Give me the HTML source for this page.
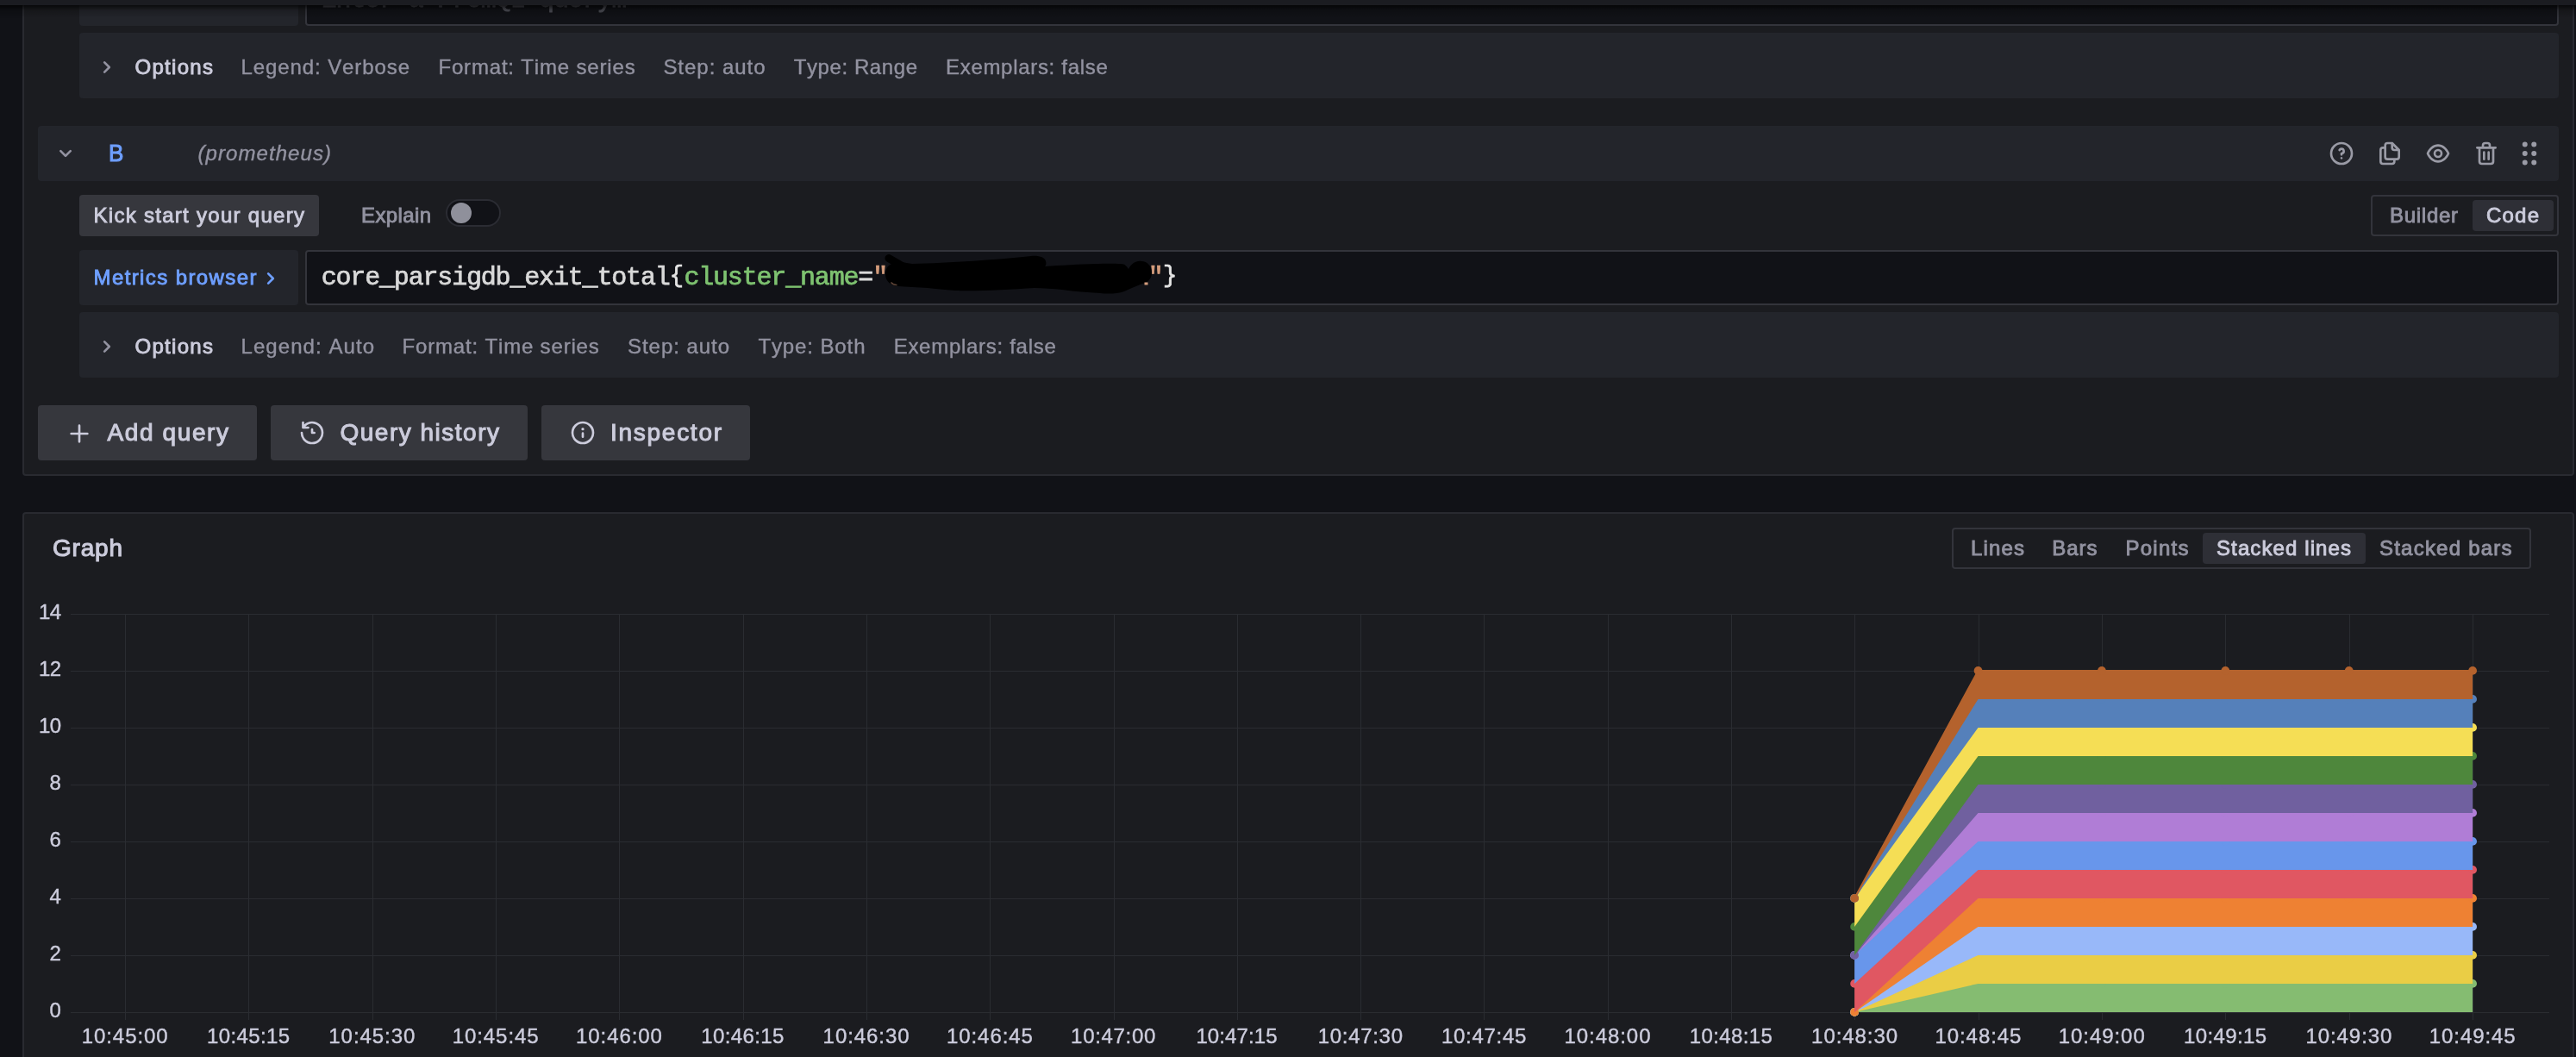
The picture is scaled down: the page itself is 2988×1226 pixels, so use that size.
<!DOCTYPE html>
<html lang="en"><head><meta charset="utf-8"><title>Explore - Grafana</title><style>
html,body{margin:0;padding:0}
body{width:2988px;height:1226px;overflow:hidden;background:#111217;position:relative;
font-family:"Liberation Sans",sans-serif;font-kerning:none}
.a{position:absolute;box-sizing:border-box}
.t{position:absolute;white-space:pre;font-family:"Liberation Sans",sans-serif}
#root{position:absolute;left:0;top:0;width:2988px;height:1226px;will-change:transform;overflow:hidden}
.br{display:inline-block;width:16.825px;font-size:27px;letter-spacing:0;text-align:center;position:relative;top:-3.2px}
.code{font-family:"Liberation Mono",monospace;font-size:30px;line-height:30px;letter-spacing:-1.175px;-webkit-text-stroke:0.75px currentColor}
</style></head>
<body>
<div id="root">
<div class="a" style="left:26px;top:-40px;width:2960px;height:592px;background:#1b1c20;border-radius:4px;border:2px solid #292a30;"></div>
<div class="a" style="left:92px;top:-34px;width:254px;height:64px;background:#23252b;border-radius:4px;"></div>
<div class="a" style="left:354px;top:-34px;width:2614px;height:64px;background:#111217;border-radius:4px;border:2px solid #33343b;"></div>
<span class="t code" style="left:372.7px;top:-15.5px;color:#4e4f57">Enter a PromQL query…</span>
<div class="a" style="left:92px;top:38px;width:2876px;height:76px;background:#23252b;border-radius:4px;"></div>
<svg class="a" style="left:107.50px;top:61.50px" width="32" height="32" viewBox="0 0 24 24"><path fill="#9292a0" d="M14.83,11.29,10.59,7.05a1,1,0,0,0-1.42,0,1,1,0,0,0,0,1.41L12.71,12,9.17,15.54a1,1,0,0,0,0,1.41,1,1,0,0,0,.71.29,1,1,0,0,0,.71-.29l4.24-4.24A1,1,0,0,0,14.83,11.29Z"/></svg>
<div class="a" style="left:44px;top:146px;width:2924px;height:64px;background:#23252b;border-radius:4px;"></div>
<svg class="a" style="left:60.00px;top:162.00px" width="32" height="32" viewBox="0 0 24 24"><path fill="#9292a0" d="M17,9.17a1,1,0,0,0-1.41,0L12,12.71,8.46,9.17a1,1,0,0,0-1.41,0,1,1,0,0,0,0,1.42l4.24,4.24a1,1,0,0,0,1.42,0L17,10.59A1,1,0,0,0,17,9.17Z"/></svg>
<svg class="a" style="left:2700.00px;top:162.00px" width="32" height="32" viewBox="0 0 24 24"><path fill="#9a9ba6" d="M11.29,15.29a1.58,1.58,0,0,0-.12.15.76.76,0,0,0-.09.18.64.64,0,0,0-.06.18,1.36,1.36,0,0,0,0,.2.84.84,0,0,0,.08.38.9.9,0,0,0,.54.54.94.94,0,0,0,.76,0,.9.9,0,0,0,.54-.54A1,1,0,0,0,13,16a1,1,0,0,0-.29-.71A1,1,0,0,0,11.29,15.29ZM12,2A10,10,0,1,0,22,12,10,10,0,0,0,12,2Zm0,18a8,8,0,1,1,8-8A8,8,0,0,1,12,20ZM12,7A3,3,0,0,0,9.4,8.5a1,1,0,1,0,1.73,1A1,1,0,0,1,12,9a1,1,0,0,1,0,2,1,1,0,0,0-1,1v1a1,1,0,0,0,2,0v-.18A3,3,0,0,0,12,7Z"/></svg>
<svg class="a" style="left:2756.00px;top:162.00px" width="32" height="32" viewBox="0 0 24 24"><path fill="#9a9ba6" d="M21,8.94a1.31,1.31,0,0,0-.06-.27l0-.09a1.07,1.07,0,0,0-.19-.28h0l-6-6h0a1.07,1.07,0,0,0-.28-.19.32.32,0,0,0-.09,0A.88.88,0,0,0,14.05,2H10A3,3,0,0,0,7,5V6H6A3,3,0,0,0,3,9V19a3,3,0,0,0,3,3h8a3,3,0,0,0,3-3V18h1a3,3,0,0,0,3-3V9S21,9,21,8.94ZM15,5.41,17.59,8H16a1,1,0,0,1-1-1ZM15,19a1,1,0,0,1-1,1H6a1,1,0,0,1-1-1V9A1,1,0,0,1,6,8H7v7a3,3,0,0,0,3,3h5Zm4-4a1,1,0,0,1-1,1H10a1,1,0,0,1-1-1V5a1,1,0,0,1,1-1h3V7a3,3,0,0,0,3,3h3Z"/></svg>
<svg class="a" style="left:2812.00px;top:162.00px" width="32" height="32" viewBox="0 0 24 24"><path fill="#9a9ba6" d="M21.92,11.6C19.9,6.91,16.1,4,12,4S4.1,6.91,2.08,11.6a1,1,0,0,0,0,.8C4.1,17.09,7.9,20,12,20s7.9-2.91,9.92-7.6A1,1,0,0,0,21.92,11.6ZM12,18c-3.17,0-6.17-2.29-7.9-6C5.83,8.29,8.83,6,12,6s6.17,2.29,7.9,6C18.17,15.71,15.17,18,12,18ZM12,8a4,4,0,1,0,4,4A4,4,0,0,0,12,8Zm0,6a2,2,0,1,1,2-2A2,2,0,0,1,12,14Z"/></svg>
<svg class="a" style="left:2868.00px;top:162.00px" width="32" height="32" viewBox="0 0 24 24"><path fill="#9a9ba6" d="M10,18a1,1,0,0,0,1-1V11a1,1,0,0,0-2,0v6A1,1,0,0,0,10,18ZM20,6H16V5a3,3,0,0,0-3-3H11A3,3,0,0,0,8,5V6H4A1,1,0,0,0,4,8H5V19a3,3,0,0,0,3,3h8a3,3,0,0,0,3-3V8h1a1,1,0,0,0,0-2ZM10,5a1,1,0,0,1,1-1h2a1,1,0,0,1,1,1V6H10Zm7,14a1,1,0,0,1-1,1H8a1,1,0,0,1-1-1V8H17Zm-3-1a1,1,0,0,0,1-1V11a1,1,0,0,0-2,0v6A1,1,0,0,0,14,18Z"/></svg>
<svg class="a" style="left:2916.20px;top:160.20px" width="36" height="36" viewBox="0 0 24 24"><path fill="#9a9ba6" d="M8.5,10a2,2,0,1,0,2,2A2,2,0,0,0,8.5,10Zm0,7a2,2,0,1,0,2,2A2,2,0,0,0,8.5,17Zm7-10a2,2,0,1,0-2-2A2,2,0,0,0,15.5,7Zm-7-4a2,2,0,1,0,2,2A2,2,0,0,0,8.5,3Zm7,14a2,2,0,1,0,2,2A2,2,0,0,0,15.5,17Zm0-7a2,2,0,1,0,2,2A2,2,0,0,0,15.5,10Z"/></svg>
<div class="a" style="left:92px;top:226px;width:278px;height:48px;background:#36373d;border-radius:4px;"></div>
<div class="a" style="left:517px;top:231px;width:64px;height:32px;background:#111217;border-radius:100px;border:2px solid #2b2c33;"></div>
<div class="a" style="left:523px;top:235px;width:24px;height:24px;border-radius:50%;background:#8f909b"></div>
<div class="a" style="left:2750px;top:226px;width:218px;height:48px;border-radius:4px;border:2px solid #33343b;"></div>
<div class="a" style="left:2868px;top:232px;width:94px;height:36px;background:#2e2f36;border-radius:4px;"></div>
<div class="a" style="left:92px;top:290px;width:254px;height:64px;background:#23252b;border-radius:4px;"></div>
<svg class="a" style="left:298.00px;top:306.50px" width="32" height="32" viewBox="0 0 24 24"><path fill="#6e9fff" d="M14.83,11.29,10.59,7.05a1,1,0,0,0-1.42,0,1,1,0,0,0,0,1.41L12.71,12,9.17,15.54a1,1,0,0,0,0,1.41,1,1,0,0,0,.71.29,1,1,0,0,0,.71-.29l4.24-4.24A1,1,0,0,0,14.83,11.29Z"/></svg>
<div class="a" style="left:354px;top:290px;width:2614px;height:64px;background:#111217;border-radius:4px;border:2px solid #33343b;"></div>
<span class="t code" id="code" style="left:372.7px;top:307.02px"><span style="color:#d9d9d9">core_parsigdb_exit_total</span><span class="br" style="color:#e4e4e4">{</span><span style="color:#7ec270">cluster_name</span><span style="color:#d9d9d9">=</span><span style="color:#d49c7c">"</span><span style="color:#d49c7c">                  "</span><span class="br" style="color:#e4e4e4">}</span></span>
<svg class="a" style="left:1020px;top:290px" width="330" height="60" viewBox="1020 290 330 60"><path d="M1031,299.6 L1054,313" stroke="#000" stroke-width="9.2" stroke-linecap="round" fill="none"/><path fill="#000" d="M1027,318 C1027,310 1032,305 1040,305 C1046,304 1052,305 1058,306 C1100,305 1160,301 1196,297 C1204,296 1212,298 1213,303 C1214,306 1213,308 1212,309 C1240,307 1280,305 1300,306 C1305,306 1307,309 1309,312 C1312,306 1318,302 1324,303 C1331,303 1336,309 1336,316 C1336,322 1333,326 1328,328 C1320,331 1312,334 1304,338 C1296,341 1284,341 1276,340 C1260,339 1245,338 1232,336 C1222,335 1210,334 1200,334 C1170,336 1130,338 1108,337 C1095,336 1085,335 1076,334 C1064,333 1052,333 1042,332 C1033,331 1027,326 1027,318 Z"/><path d="M1033.5,327.5 Q1036,330.5 1040.5,330.6" stroke="#d49c7c" stroke-opacity=".45" stroke-width="1.3" fill="none"/><rect x="1327.5" y="327.5" width="4" height="3" fill="#d49c7c"/></svg>
<div class="a" style="left:92px;top:362px;width:2876px;height:76px;background:#23252b;border-radius:4px;"></div>
<svg class="a" style="left:107.50px;top:385.50px" width="32" height="32" viewBox="0 0 24 24"><path fill="#9292a0" d="M14.83,11.29,10.59,7.05a1,1,0,0,0-1.42,0,1,1,0,0,0,0,1.41L12.71,12,9.17,15.54a1,1,0,0,0,0,1.41,1,1,0,0,0,.71.29,1,1,0,0,0,.71-.29l4.24-4.24A1,1,0,0,0,14.83,11.29Z"/></svg>
<div class="a" style="left:44px;top:470px;width:254px;height:64px;background:#36373d;border-radius:4px;"></div>
<svg class="a" style="left:76.00px;top:486.50px" width="32" height="32" viewBox="0 0 24 24"><path fill="#ccccdc" d="M19,11H13V5a1,1,0,0,0-2,0v6H5a1,1,0,0,0,0,2h6v6a1,1,0,0,0,2,0V13h6a1,1,0,0,0,0-2Z"/></svg>
<div class="a" style="left:314px;top:470px;width:298px;height:64px;background:#36373d;border-radius:4px;"></div>
<svg class="a" style="left:346.00px;top:486.00px" width="32" height="32" viewBox="0 0 24 24"><path fill="#ccccdc" d="M12,2A10,10,0,0,0,5.12,4.77V3a1,1,0,0,0-2,0V7.5a1,1,0,0,0,1,1H8.62a1,1,0,0,0,0-2H6.22A8,8,0,1,1,4,12a1,1,0,0,0-2,0A10,10,0,1,0,12,2Zm0,6a1,1,0,0,0-1,1v3a1,1,0,0,0,1,1h2a1,1,0,0,0,0-2H13V9A1,1,0,0,0,12,8Z"/></svg>
<div class="a" style="left:628px;top:470px;width:242px;height:64px;background:#36373d;border-radius:4px;"></div>
<svg class="a" style="left:659.50px;top:486.00px" width="32" height="32" viewBox="0 0 24 24"><path fill="#ccccdc" d="M12,2A10,10,0,1,0,22,12,10.01114,10.01114,0,0,0,12,2Zm0,18a8,8,0,1,1,8-8A8.00917,8.00917,0,0,1,12,20Zm0-8.5a1,1,0,0,0-1,1v3a1,1,0,0,0,2,0v-3A1,1,0,0,0,12,11.5Zm0-4a1.25,1.25,0,1,0,1.25,1.25A1.25,1.25,0,0,0,12,7.5Z"/></svg>
<div class="a" style="left:26px;top:594px;width:2960px;height:706px;background:#1b1c20;border-radius:4px;border:2px solid #292a30;"></div>
<div class="a" style="left:2264px;top:612px;width:672px;height:48px;border-radius:4px;border:2px solid #33343b;"></div>
<div class="a" style="left:2555px;top:618px;width:189px;height:36px;background:#2e2f36;border-radius:4px;"></div>
<svg class="a" style="left:0;top:0" width="2988" height="1226" viewBox="0 0 2988 1226"><rect x="82" y="1174" width="2875" height="1" fill="#2a2c31"/><rect x="82" y="1108" width="2875" height="1" fill="#2a2c31"/><rect x="82" y="1042" width="2875" height="1" fill="#2a2c31"/><rect x="82" y="976" width="2875" height="1" fill="#2a2c31"/><rect x="82" y="910" width="2875" height="1" fill="#2a2c31"/><rect x="82" y="844" width="2875" height="1" fill="#2a2c31"/><rect x="82" y="778" width="2875" height="1" fill="#2a2c31"/><rect x="82" y="712" width="2875" height="1" fill="#2a2c31"/><rect x="145" y="712" width="1" height="471" fill="#2a2c31"/><rect x="288" y="712" width="1" height="471" fill="#2a2c31"/><rect x="432" y="712" width="1" height="471" fill="#2a2c31"/><rect x="575" y="712" width="1" height="471" fill="#2a2c31"/><rect x="718" y="712" width="1" height="471" fill="#2a2c31"/><rect x="862" y="712" width="1" height="471" fill="#2a2c31"/><rect x="1005" y="712" width="1" height="471" fill="#2a2c31"/><rect x="1148" y="712" width="1" height="471" fill="#2a2c31"/><rect x="1292" y="712" width="1" height="471" fill="#2a2c31"/><rect x="1435" y="712" width="1" height="471" fill="#2a2c31"/><rect x="1578" y="712" width="1" height="471" fill="#2a2c31"/><rect x="1721" y="712" width="1" height="471" fill="#2a2c31"/><rect x="1865" y="712" width="1" height="471" fill="#2a2c31"/><rect x="2008" y="712" width="1" height="471" fill="#2a2c31"/><rect x="2151" y="712" width="1" height="471" fill="#2a2c31"/><rect x="2295" y="712" width="1" height="471" fill="#2a2c31"/><rect x="2438" y="712" width="1" height="471" fill="#2a2c31"/><rect x="2581" y="712" width="1" height="471" fill="#2a2c31"/><rect x="2725" y="712" width="1" height="471" fill="#2a2c31"/><rect x="2868" y="712" width="1" height="471" fill="#2a2c31"/><polygon points="2151.12,1173.90 2294.52,1140.90 2437.92,1140.90 2581.31,1140.90 2724.71,1140.90 2868.10,1140.90 2868.10,1173.90 2724.71,1173.90 2581.31,1173.90 2437.92,1173.90 2294.52,1173.90 2151.12,1173.90" fill="#85bc71"/><polyline points="2151.12,1173.90 2294.52,1140.90 2437.92,1140.90 2581.31,1140.90 2724.71,1140.90 2868.10,1140.90" fill="none" stroke="#85bc71" stroke-width="2"/><circle cx="2151.12" cy="1173.90" r="4.9" fill="#85bc71"/><circle cx="2294.52" cy="1140.90" r="4.9" fill="#85bc71"/><circle cx="2437.92" cy="1140.90" r="4.9" fill="#85bc71"/><circle cx="2581.31" cy="1140.90" r="4.9" fill="#85bc71"/><circle cx="2724.71" cy="1140.90" r="4.9" fill="#85bc71"/><circle cx="2868.10" cy="1140.90" r="4.9" fill="#85bc71"/><polygon points="2151.12,1173.90 2294.52,1107.90 2437.92,1107.90 2581.31,1107.90 2724.71,1107.90 2868.10,1107.90 2868.10,1140.90 2724.71,1140.90 2581.31,1140.90 2437.92,1140.90 2294.52,1140.90 2151.12,1173.90" fill="#eacd45"/><polyline points="2151.12,1173.90 2294.52,1107.90 2437.92,1107.90 2581.31,1107.90 2724.71,1107.90 2868.10,1107.90" fill="none" stroke="#eacd45" stroke-width="2"/><circle cx="2151.12" cy="1173.90" r="4.9" fill="#eacd45"/><circle cx="2294.52" cy="1107.90" r="4.9" fill="#eacd45"/><circle cx="2437.92" cy="1107.90" r="4.9" fill="#eacd45"/><circle cx="2581.31" cy="1107.90" r="4.9" fill="#eacd45"/><circle cx="2724.71" cy="1107.90" r="4.9" fill="#eacd45"/><circle cx="2868.10" cy="1107.90" r="4.9" fill="#eacd45"/><polygon points="2151.12,1173.90 2294.52,1074.90 2437.92,1074.90 2581.31,1074.90 2724.71,1074.90 2868.10,1074.90 2868.10,1107.90 2724.71,1107.90 2581.31,1107.90 2437.92,1107.90 2294.52,1107.90 2151.12,1173.90" fill="#98b8f9"/><polyline points="2151.12,1173.90 2294.52,1074.90 2437.92,1074.90 2581.31,1074.90 2724.71,1074.90 2868.10,1074.90" fill="none" stroke="#98b8f9" stroke-width="2"/><circle cx="2151.12" cy="1173.90" r="4.9" fill="#98b8f9"/><circle cx="2294.52" cy="1074.90" r="4.9" fill="#98b8f9"/><circle cx="2437.92" cy="1074.90" r="4.9" fill="#98b8f9"/><circle cx="2581.31" cy="1074.90" r="4.9" fill="#98b8f9"/><circle cx="2724.71" cy="1074.90" r="4.9" fill="#98b8f9"/><circle cx="2868.10" cy="1074.90" r="4.9" fill="#98b8f9"/><polygon points="2151.12,1173.90 2294.52,1041.90 2437.92,1041.90 2581.31,1041.90 2724.71,1041.90 2868.10,1041.90 2868.10,1074.90 2724.71,1074.90 2581.31,1074.90 2437.92,1074.90 2294.52,1074.90 2151.12,1173.90" fill="#ee8133"/><polyline points="2151.12,1173.90 2294.52,1041.90 2437.92,1041.90 2581.31,1041.90 2724.71,1041.90 2868.10,1041.90" fill="none" stroke="#ee8133" stroke-width="2"/><circle cx="2151.12" cy="1173.90" r="4.9" fill="#ee8133"/><circle cx="2294.52" cy="1041.90" r="4.9" fill="#ee8133"/><circle cx="2437.92" cy="1041.90" r="4.9" fill="#ee8133"/><circle cx="2581.31" cy="1041.90" r="4.9" fill="#ee8133"/><circle cx="2724.71" cy="1041.90" r="4.9" fill="#ee8133"/><circle cx="2868.10" cy="1041.90" r="4.9" fill="#ee8133"/><polygon points="2151.12,1140.90 2294.52,1008.90 2437.92,1008.90 2581.31,1008.90 2724.71,1008.90 2868.10,1008.90 2868.10,1041.90 2724.71,1041.90 2581.31,1041.90 2437.92,1041.90 2294.52,1041.90 2151.12,1173.90" fill="#e05762"/><polyline points="2151.12,1140.90 2294.52,1008.90 2437.92,1008.90 2581.31,1008.90 2724.71,1008.90 2868.10,1008.90" fill="none" stroke="#e05762" stroke-width="2"/><circle cx="2151.12" cy="1140.90" r="4.9" fill="#e05762"/><circle cx="2294.52" cy="1008.90" r="4.9" fill="#e05762"/><circle cx="2437.92" cy="1008.90" r="4.9" fill="#e05762"/><circle cx="2581.31" cy="1008.90" r="4.9" fill="#e05762"/><circle cx="2724.71" cy="1008.90" r="4.9" fill="#e05762"/><circle cx="2868.10" cy="1008.90" r="4.9" fill="#e05762"/><polygon points="2151.12,1107.90 2294.52,975.90 2437.92,975.90 2581.31,975.90 2724.71,975.90 2868.10,975.90 2868.10,1008.90 2724.71,1008.90 2581.31,1008.90 2437.92,1008.90 2294.52,1008.90 2151.12,1140.90" fill="#6896eb"/><polyline points="2151.12,1107.90 2294.52,975.90 2437.92,975.90 2581.31,975.90 2724.71,975.90 2868.10,975.90" fill="none" stroke="#6896eb" stroke-width="2"/><circle cx="2151.12" cy="1107.90" r="4.9" fill="#6896eb"/><circle cx="2294.52" cy="975.90" r="4.9" fill="#6896eb"/><circle cx="2437.92" cy="975.90" r="4.9" fill="#6896eb"/><circle cx="2581.31" cy="975.90" r="4.9" fill="#6896eb"/><circle cx="2724.71" cy="975.90" r="4.9" fill="#6896eb"/><circle cx="2868.10" cy="975.90" r="4.9" fill="#6896eb"/><polygon points="2151.12,1107.90 2294.52,942.90 2437.92,942.90 2581.31,942.90 2724.71,942.90 2868.10,942.90 2868.10,975.90 2724.71,975.90 2581.31,975.90 2437.92,975.90 2294.52,975.90 2151.12,1107.90" fill="#b07dd6"/><polyline points="2151.12,1107.90 2294.52,942.90 2437.92,942.90 2581.31,942.90 2724.71,942.90 2868.10,942.90" fill="none" stroke="#b07dd6" stroke-width="2"/><circle cx="2151.12" cy="1107.90" r="4.9" fill="#b07dd6"/><circle cx="2294.52" cy="942.90" r="4.9" fill="#b07dd6"/><circle cx="2437.92" cy="942.90" r="4.9" fill="#b07dd6"/><circle cx="2581.31" cy="942.90" r="4.9" fill="#b07dd6"/><circle cx="2724.71" cy="942.90" r="4.9" fill="#b07dd6"/><circle cx="2868.10" cy="942.90" r="4.9" fill="#b07dd6"/><polygon points="2151.12,1107.90 2294.52,909.90 2437.92,909.90 2581.31,909.90 2724.71,909.90 2868.10,909.90 2868.10,942.90 2724.71,942.90 2581.31,942.90 2437.92,942.90 2294.52,942.90 2151.12,1107.90" fill="#70609f"/><polyline points="2151.12,1107.90 2294.52,909.90 2437.92,909.90 2581.31,909.90 2724.71,909.90 2868.10,909.90" fill="none" stroke="#70609f" stroke-width="2"/><circle cx="2151.12" cy="1107.90" r="4.9" fill="#70609f"/><circle cx="2294.52" cy="909.90" r="4.9" fill="#70609f"/><circle cx="2437.92" cy="909.90" r="4.9" fill="#70609f"/><circle cx="2581.31" cy="909.90" r="4.9" fill="#70609f"/><circle cx="2724.71" cy="909.90" r="4.9" fill="#70609f"/><circle cx="2868.10" cy="909.90" r="4.9" fill="#70609f"/><polygon points="2151.12,1074.90 2294.52,876.90 2437.92,876.90 2581.31,876.90 2724.71,876.90 2868.10,876.90 2868.10,909.90 2724.71,909.90 2581.31,909.90 2437.92,909.90 2294.52,909.90 2151.12,1107.90" fill="#4e873c"/><polyline points="2151.12,1074.90 2294.52,876.90 2437.92,876.90 2581.31,876.90 2724.71,876.90 2868.10,876.90" fill="none" stroke="#4e873c" stroke-width="2"/><circle cx="2151.12" cy="1074.90" r="4.9" fill="#4e873c"/><circle cx="2294.52" cy="876.90" r="4.9" fill="#4e873c"/><circle cx="2437.92" cy="876.90" r="4.9" fill="#4e873c"/><circle cx="2581.31" cy="876.90" r="4.9" fill="#4e873c"/><circle cx="2724.71" cy="876.90" r="4.9" fill="#4e873c"/><circle cx="2868.10" cy="876.90" r="4.9" fill="#4e873c"/><polygon points="2151.12,1041.90 2294.52,843.90 2437.92,843.90 2581.31,843.90 2724.71,843.90 2868.10,843.90 2868.10,876.90 2724.71,876.90 2581.31,876.90 2437.92,876.90 2294.52,876.90 2151.12,1074.90" fill="#f5de55"/><polyline points="2151.12,1041.90 2294.52,843.90 2437.92,843.90 2581.31,843.90 2724.71,843.90 2868.10,843.90" fill="none" stroke="#f5de55" stroke-width="2"/><circle cx="2151.12" cy="1041.90" r="4.9" fill="#f5de55"/><circle cx="2294.52" cy="843.90" r="4.9" fill="#f5de55"/><circle cx="2437.92" cy="843.90" r="4.9" fill="#f5de55"/><circle cx="2581.31" cy="843.90" r="4.9" fill="#f5de55"/><circle cx="2724.71" cy="843.90" r="4.9" fill="#f5de55"/><circle cx="2868.10" cy="843.90" r="4.9" fill="#f5de55"/><polygon points="2151.12,1041.90 2294.52,810.90 2437.92,810.90 2581.31,810.90 2724.71,810.90 2868.10,810.90 2868.10,843.90 2724.71,843.90 2581.31,843.90 2437.92,843.90 2294.52,843.90 2151.12,1041.90" fill="#5580ba"/><polyline points="2151.12,1041.90 2294.52,810.90 2437.92,810.90 2581.31,810.90 2724.71,810.90 2868.10,810.90" fill="none" stroke="#5580ba" stroke-width="2"/><circle cx="2151.12" cy="1041.90" r="4.9" fill="#5580ba"/><circle cx="2294.52" cy="810.90" r="4.9" fill="#5580ba"/><circle cx="2437.92" cy="810.90" r="4.9" fill="#5580ba"/><circle cx="2581.31" cy="810.90" r="4.9" fill="#5580ba"/><circle cx="2724.71" cy="810.90" r="4.9" fill="#5580ba"/><circle cx="2868.10" cy="810.90" r="4.9" fill="#5580ba"/><polygon points="2151.12,1041.90 2294.52,777.90 2437.92,777.90 2581.31,777.90 2724.71,777.90 2868.10,777.90 2868.10,810.90 2724.71,810.90 2581.31,810.90 2437.92,810.90 2294.52,810.90 2151.12,1041.90" fill="#b4622d"/><polyline points="2151.12,1041.90 2294.52,777.90 2437.92,777.90 2581.31,777.90 2724.71,777.90 2868.10,777.90" fill="none" stroke="#b4622d" stroke-width="2"/><circle cx="2151.12" cy="1041.90" r="4.9" fill="#b4622d"/><circle cx="2294.52" cy="777.90" r="4.9" fill="#b4622d"/><circle cx="2437.92" cy="777.90" r="4.9" fill="#b4622d"/><circle cx="2581.31" cy="777.90" r="4.9" fill="#b4622d"/><circle cx="2724.71" cy="777.90" r="4.9" fill="#b4622d"/><circle cx="2868.10" cy="777.90" r="4.9" fill="#b4622d"/></svg>
<span class="t" style="left:156.5px;top:65.68px;font-size:24px;line-height:24px;color:#ccccdc;letter-spacing:1.297px;-webkit-text-stroke:0.9px #ccccdc;">Options</span>
<span class="t" style="left:279.5px;top:65.68px;font-size:24px;line-height:24px;color:#9292a0;letter-spacing:0.906px;-webkit-text-stroke:0.4px #9292a0;">Legend: Verbose</span>
<span class="t" style="left:508.4px;top:65.68px;font-size:24px;line-height:24px;color:#9292a0;letter-spacing:0.829px;-webkit-text-stroke:0.4px #9292a0;">Format: Time series</span>
<span class="t" style="left:769.4px;top:65.68px;font-size:24px;line-height:24px;color:#9292a0;letter-spacing:0.975px;-webkit-text-stroke:0.4px #9292a0;">Step: auto</span>
<span class="t" style="left:920.8px;top:65.68px;font-size:24px;line-height:24px;color:#9292a0;letter-spacing:0.578px;-webkit-text-stroke:0.4px #9292a0;">Type: Range</span>
<span class="t" style="left:1097px;top:65.68px;font-size:24px;line-height:24px;color:#9292a0;letter-spacing:0.693px;-webkit-text-stroke:0.4px #9292a0;">Exemplars: false</span>
<span class="t" style="left:126.3px;top:163.80px;font-size:28px;line-height:28px;color:#6e9fff;-webkit-text-stroke:1.05px #6e9fff;transform:scaleX(0.93);transform-origin:0 0;">B</span>
<span class="t" style="left:229.5px;top:166.18px;font-size:24px;line-height:24px;color:#9292a0;letter-spacing:1.070px;-webkit-text-stroke:0.4px #9292a0;font-style:italic;">(prometheus)</span>
<span class="t" style="left:108.5px;top:237.68px;font-size:24px;line-height:24px;color:#ccccdc;letter-spacing:1.288px;-webkit-text-stroke:0.9px #ccccdc;">Kick start your query</span>
<span class="t" style="left:419px;top:237.68px;font-size:24px;line-height:24px;color:#9292a0;letter-spacing:0.380px;-webkit-text-stroke:0.9px #9292a0;">Explain</span>
<span class="t" style="left:2772px;top:237.68px;font-size:24px;line-height:24px;color:#9292a0;letter-spacing:0.714px;-webkit-text-stroke:0.9px #9292a0;">Builder</span>
<span class="t" style="left:2884px;top:237.68px;font-size:24px;line-height:24px;color:#ccccdc;letter-spacing:1.208px;-webkit-text-stroke:0.9px #ccccdc;">Code</span>
<span class="t" style="left:108.5px;top:309.68px;font-size:24px;line-height:24px;color:#6e9fff;letter-spacing:1.403px;-webkit-text-stroke:0.9px #6e9fff;">Metrics browser</span>
<span class="t" style="left:156.5px;top:389.68px;font-size:24px;line-height:24px;color:#ccccdc;letter-spacing:1.297px;-webkit-text-stroke:0.9px #ccccdc;">Options</span>
<span class="t" style="left:279.5px;top:389.68px;font-size:24px;line-height:24px;color:#9292a0;letter-spacing:1.064px;-webkit-text-stroke:0.4px #9292a0;">Legend: Auto</span>
<span class="t" style="left:466.5px;top:389.68px;font-size:24px;line-height:24px;color:#9292a0;letter-spacing:0.829px;-webkit-text-stroke:0.4px #9292a0;">Format: Time series</span>
<span class="t" style="left:728px;top:389.68px;font-size:24px;line-height:24px;color:#9292a0;letter-spacing:0.953px;-webkit-text-stroke:0.4px #9292a0;">Step: auto</span>
<span class="t" style="left:879.4px;top:389.68px;font-size:24px;line-height:24px;color:#9292a0;letter-spacing:0.893px;-webkit-text-stroke:0.4px #9292a0;">Type: Both</span>
<span class="t" style="left:1036.7px;top:389.68px;font-size:24px;line-height:24px;color:#9292a0;letter-spacing:0.713px;-webkit-text-stroke:0.4px #9292a0;">Exemplars: false</span>
<span class="t" style="left:124.5px;top:488.30px;font-size:28px;line-height:28px;color:#ccccdc;letter-spacing:1.607px;-webkit-text-stroke:1.05px #ccccdc;">Add query</span>
<span class="t" style="left:394.5px;top:488.30px;font-size:28px;line-height:28px;color:#ccccdc;letter-spacing:1.500px;-webkit-text-stroke:1.05px #ccccdc;">Query history</span>
<span class="t" style="left:708px;top:488.30px;font-size:28px;line-height:28px;color:#ccccdc;letter-spacing:1.729px;-webkit-text-stroke:1.05px #ccccdc;">Inspector</span>
<span class="t" style="left:61px;top:622.30px;font-size:28px;line-height:28px;color:#ccccdc;letter-spacing:0.793px;-webkit-text-stroke:1.05px #ccccdc;">Graph</span>
<span class="t" style="left:2286px;top:623.88px;font-size:24px;line-height:24px;color:#9292a0;letter-spacing:1.156px;-webkit-text-stroke:0.9px #9292a0;">Lines</span>
<span class="t" style="left:2380.3px;top:623.88px;font-size:24px;line-height:24px;color:#9292a0;letter-spacing:0.980px;-webkit-text-stroke:0.9px #9292a0;">Bars</span>
<span class="t" style="left:2465.5px;top:623.88px;font-size:24px;line-height:24px;color:#9292a0;letter-spacing:1.259px;-webkit-text-stroke:0.9px #9292a0;">Points</span>
<span class="t" style="left:2571px;top:623.88px;font-size:24px;line-height:24px;color:#ccccdc;letter-spacing:1.104px;-webkit-text-stroke:0.9px #ccccdc;">Stacked lines</span>
<span class="t" style="left:2760px;top:623.88px;font-size:24px;line-height:24px;color:#9292a0;letter-spacing:1.220px;-webkit-text-stroke:0.9px #9292a0;">Stacked bars</span>
<span class="t" style="left:57.5px;top:1160.48px;font-size:24px;line-height:24px;color:#ccccdc;-webkit-text-stroke:0.4px #ccccdc;">0</span>
<span class="t" style="left:57.5px;top:1094.48px;font-size:24px;line-height:24px;color:#ccccdc;-webkit-text-stroke:0.4px #ccccdc;">2</span>
<span class="t" style="left:57.5px;top:1028.48px;font-size:24px;line-height:24px;color:#ccccdc;-webkit-text-stroke:0.4px #ccccdc;">4</span>
<span class="t" style="left:57.5px;top:962.48px;font-size:24px;line-height:24px;color:#ccccdc;-webkit-text-stroke:0.4px #ccccdc;">6</span>
<span class="t" style="left:57.5px;top:896.48px;font-size:24px;line-height:24px;color:#ccccdc;-webkit-text-stroke:0.4px #ccccdc;">8</span>
<span class="t" style="left:45px;top:830.48px;font-size:24px;line-height:24px;color:#ccccdc;letter-spacing:-0.703px;-webkit-text-stroke:0.4px #ccccdc;">10</span>
<span class="t" style="left:45px;top:764.48px;font-size:24px;line-height:24px;color:#ccccdc;letter-spacing:-0.703px;-webkit-text-stroke:0.4px #ccccdc;">12</span>
<span class="t" style="left:45px;top:698.48px;font-size:24px;line-height:24px;color:#ccccdc;letter-spacing:-0.703px;-webkit-text-stroke:0.4px #ccccdc;">14</span>
<span class="t" style="left:94.69999999999999px;top:1190.18px;font-size:24px;line-height:24px;color:#ccccdc;letter-spacing:0.940px;-webkit-text-stroke:0.4px #ccccdc;">10:45:00</span>
<span class="t" style="left:240.01600000000002px;top:1190.18px;font-size:24px;line-height:24px;color:#ccccdc;letter-spacing:0.368px;-webkit-text-stroke:0.4px #ccccdc;">10:45:15</span>
<span class="t" style="left:381.332px;top:1190.18px;font-size:24px;line-height:24px;color:#ccccdc;letter-spacing:0.940px;-webkit-text-stroke:0.4px #ccccdc;">10:45:30</span>
<span class="t" style="left:524.648px;top:1190.18px;font-size:24px;line-height:24px;color:#ccccdc;letter-spacing:0.940px;-webkit-text-stroke:0.4px #ccccdc;">10:45:45</span>
<span class="t" style="left:667.964px;top:1190.18px;font-size:24px;line-height:24px;color:#ccccdc;letter-spacing:0.940px;-webkit-text-stroke:0.4px #ccccdc;">10:46:00</span>
<span class="t" style="left:813.2800000000001px;top:1190.18px;font-size:24px;line-height:24px;color:#ccccdc;letter-spacing:0.368px;-webkit-text-stroke:0.4px #ccccdc;">10:46:15</span>
<span class="t" style="left:954.596px;top:1190.18px;font-size:24px;line-height:24px;color:#ccccdc;letter-spacing:0.940px;-webkit-text-stroke:0.4px #ccccdc;">10:46:30</span>
<span class="t" style="left:1097.912px;top:1190.18px;font-size:24px;line-height:24px;color:#ccccdc;letter-spacing:0.940px;-webkit-text-stroke:0.4px #ccccdc;">10:46:45</span>
<span class="t" style="left:1242.103px;top:1190.18px;font-size:24px;line-height:24px;color:#ccccdc;letter-spacing:0.690px;-webkit-text-stroke:0.4px #ccccdc;">10:47:00</span>
<span class="t" style="left:1387.419px;top:1190.18px;font-size:24px;line-height:24px;color:#ccccdc;letter-spacing:0.118px;-webkit-text-stroke:0.4px #ccccdc;">10:47:15</span>
<span class="t" style="left:1528.7350000000001px;top:1190.18px;font-size:24px;line-height:24px;color:#ccccdc;letter-spacing:0.690px;-webkit-text-stroke:0.4px #ccccdc;">10:47:30</span>
<span class="t" style="left:1672.0510000000002px;top:1190.18px;font-size:24px;line-height:24px;color:#ccccdc;letter-spacing:0.690px;-webkit-text-stroke:0.4px #ccccdc;">10:47:45</span>
<span class="t" style="left:1814.492px;top:1190.18px;font-size:24px;line-height:24px;color:#ccccdc;letter-spacing:0.940px;-webkit-text-stroke:0.4px #ccccdc;">10:48:00</span>
<span class="t" style="left:1959.808px;top:1190.18px;font-size:24px;line-height:24px;color:#ccccdc;letter-spacing:0.368px;-webkit-text-stroke:0.4px #ccccdc;">10:48:15</span>
<span class="t" style="left:2101.124px;top:1190.18px;font-size:24px;line-height:24px;color:#ccccdc;letter-spacing:0.940px;-webkit-text-stroke:0.4px #ccccdc;">10:48:30</span>
<span class="t" style="left:2244.44px;top:1190.18px;font-size:24px;line-height:24px;color:#ccccdc;letter-spacing:0.940px;-webkit-text-stroke:0.4px #ccccdc;">10:48:45</span>
<span class="t" style="left:2387.756px;top:1190.18px;font-size:24px;line-height:24px;color:#ccccdc;letter-spacing:0.940px;-webkit-text-stroke:0.4px #ccccdc;">10:49:00</span>
<span class="t" style="left:2533.0719999999997px;top:1190.18px;font-size:24px;line-height:24px;color:#ccccdc;letter-spacing:0.368px;-webkit-text-stroke:0.4px #ccccdc;">10:49:15</span>
<span class="t" style="left:2674.388px;top:1190.18px;font-size:24px;line-height:24px;color:#ccccdc;letter-spacing:0.940px;-webkit-text-stroke:0.4px #ccccdc;">10:49:30</span>
<span class="t" style="left:2817.7039999999997px;top:1190.18px;font-size:24px;line-height:24px;color:#ccccdc;letter-spacing:0.940px;-webkit-text-stroke:0.4px #ccccdc;">10:49:45</span>
<div class="a" style="left:0;top:6px;width:2988px;height:15px;background:linear-gradient(rgba(0,0,0,.7),rgba(0,0,0,.2) 40%,rgba(0,0,0,0))"></div>
<div class="a" style="left:0;top:0;width:2988px;height:6px;background:#1b1c21"></div>
</div>
</body></html>
